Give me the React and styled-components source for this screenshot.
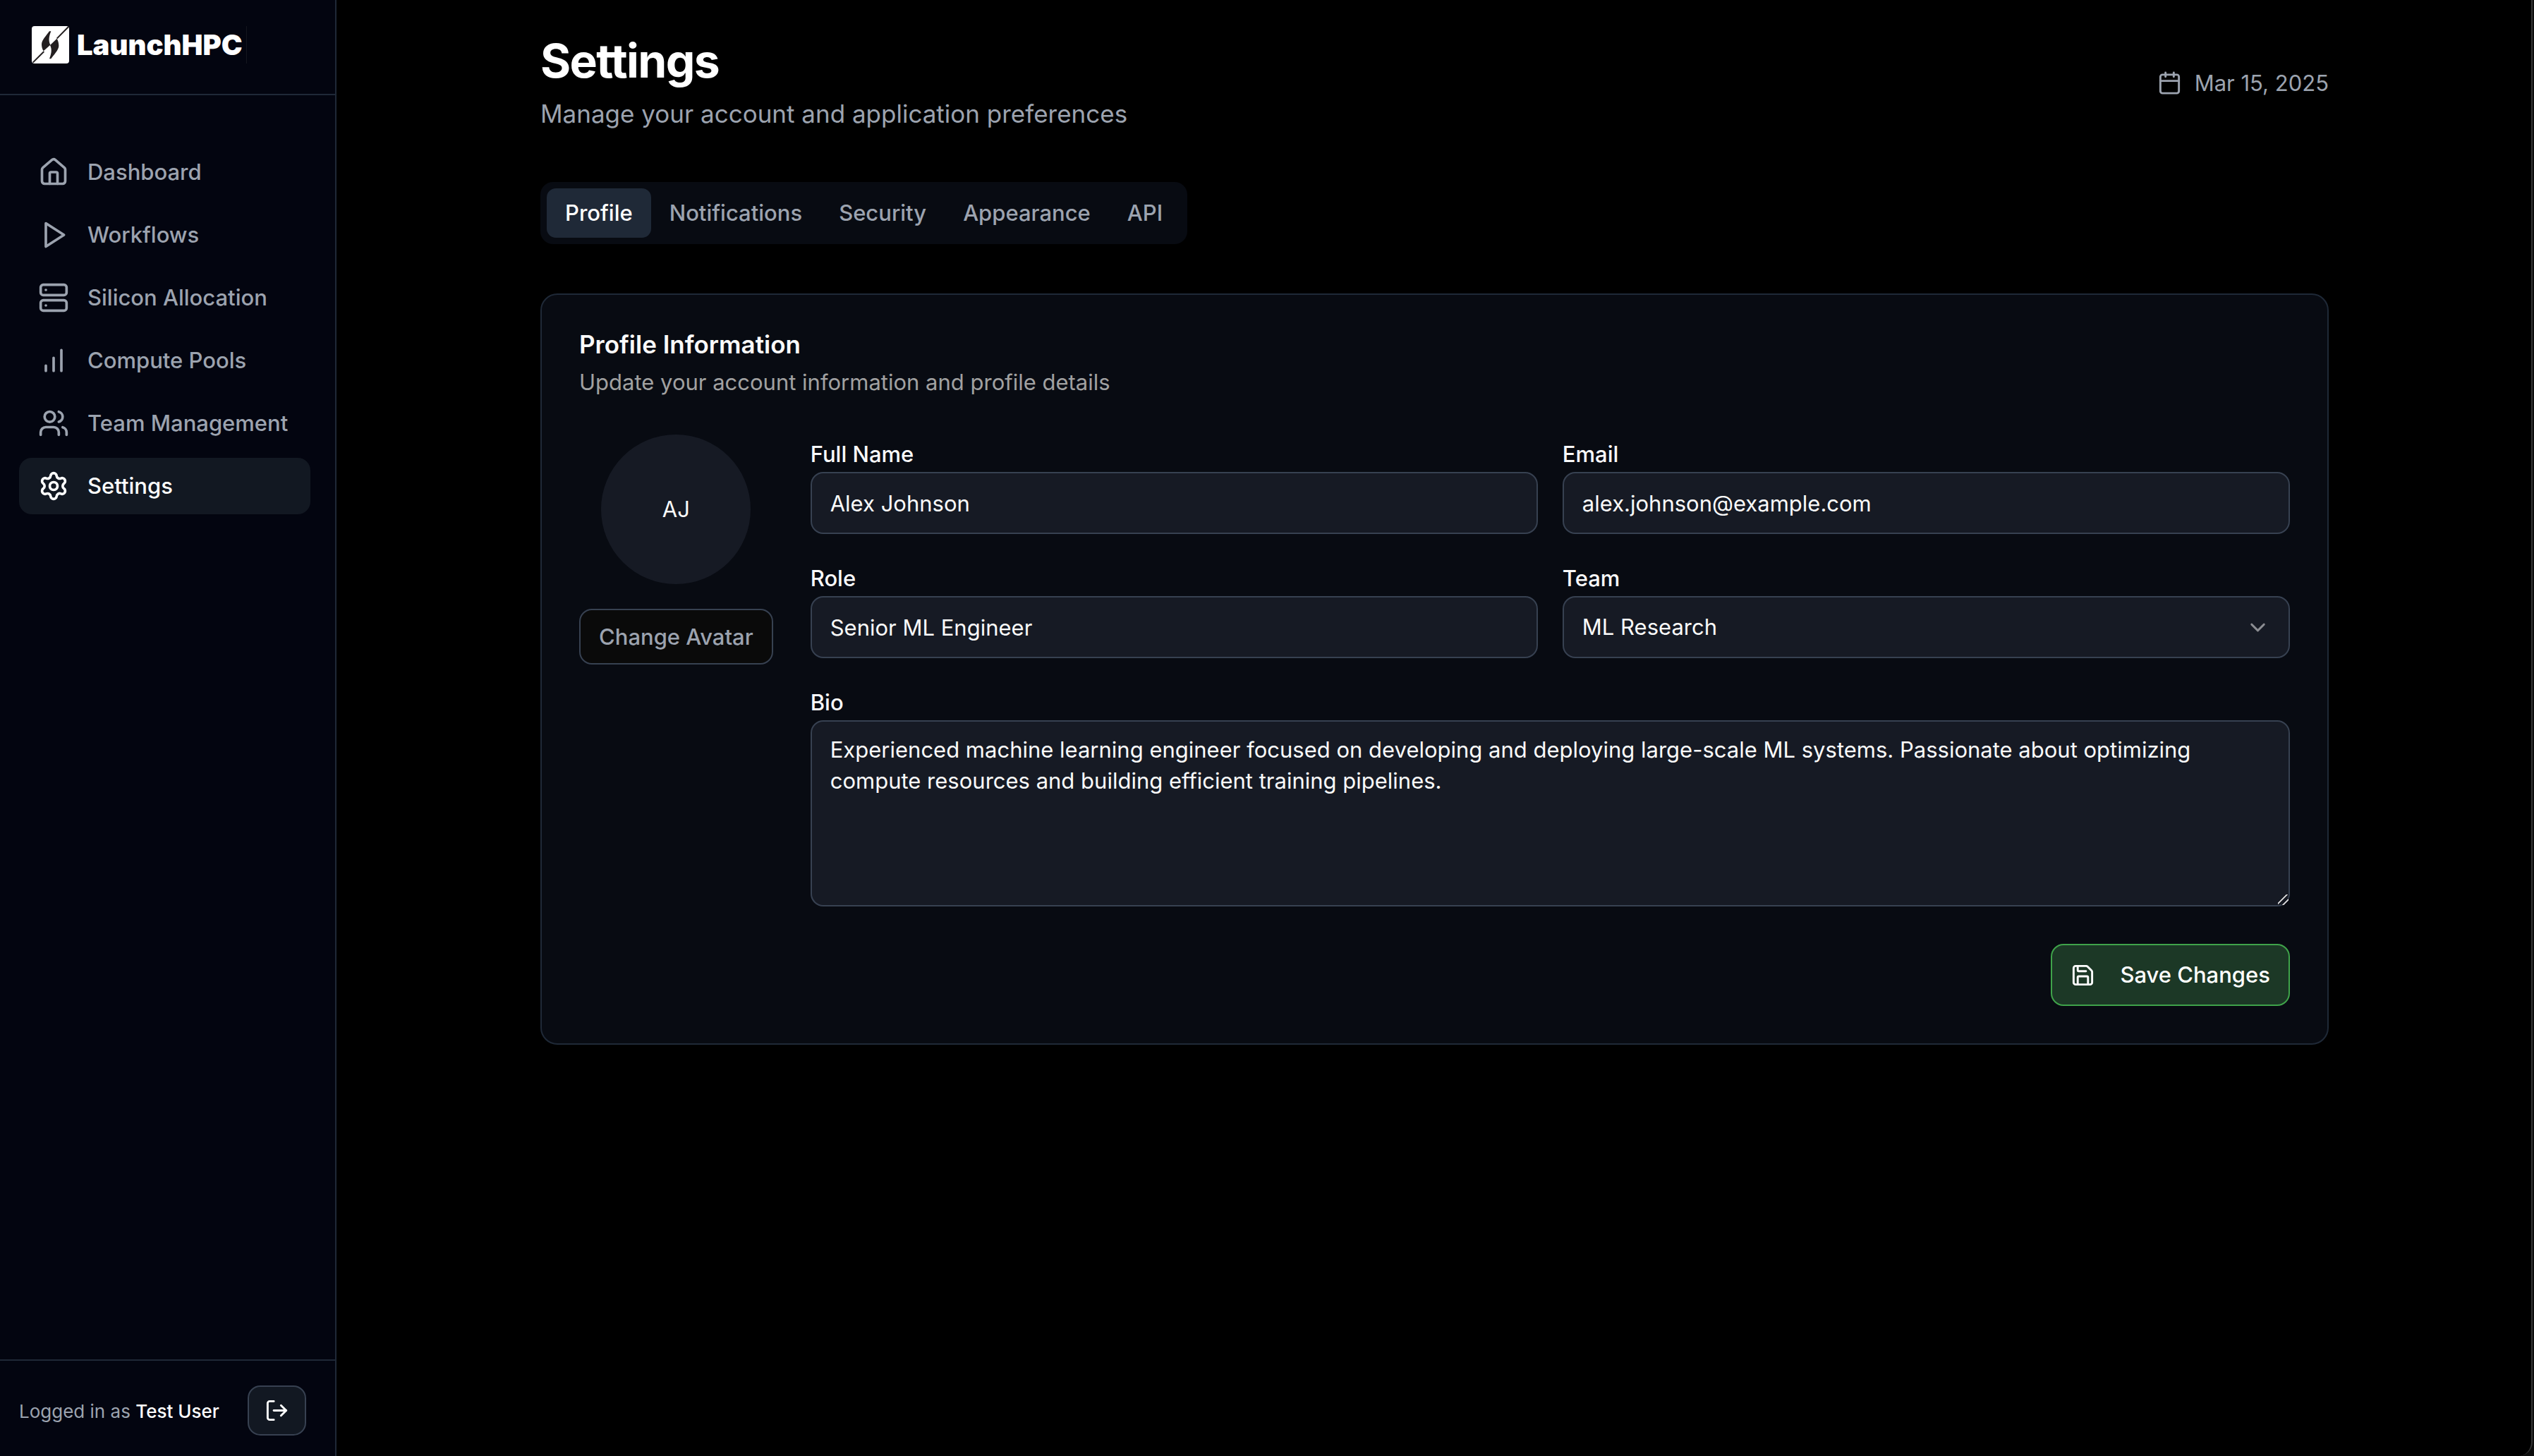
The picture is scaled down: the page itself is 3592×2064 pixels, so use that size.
import React, { useState } from "react";
import styled, { createGlobalStyle } from "styled-components";
import {
  House,
  Server,
  Users,
  Settings,
  LogOut,
  Calendar,
  ChevronDown,
  Save,
} from "lucide-react";

const color = {
  page: "#000000",
  sidebar: "#030510",
  panel: "#080b12",
  field: "#161a24",
  active: "#121822",
  tabActive: "#1f2937",
  line: "#1f2937",
  fieldLine: "#374151",
  text: "#fafafa",
  muted: "#9ca3af",
  neutral: "#a1a1a1",
};

const GlobalStyle = createGlobalStyle`
  *, *::before, *::after { box-sizing: border-box; }
  body {
    margin: 0;
    background: ${color.page};
    color: ${color.text};
    font-family: Inter, "Liberation Sans", sans-serif;
    font-size: 31px;
    line-height: 44px;
    -webkit-font-smoothing: antialiased;
  }
  h1, h2, p { margin: 0; }
  button, input, select, textarea { font: inherit; color: inherit; margin: 0; }
`;

const Frame = styled.div`
  padding-right: 2px;
  background: #0c0c0c;
`;

const Shell = styled.div`
  display: flex;
  min-height: 100vh;
  background: ${color.page};
  border-right: 2px solid #333333;
  border-bottom-right-radius: 20px;
`;

const Sidebar = styled.aside`
  display: flex;
  flex-direction: column;
  flex: 0 0 477px;
  background: ${color.sidebar};
  border-right: 2px solid ${color.line};
`;

const Brand = styled.header`
  display: flex;
  align-items: flex-start;
  height: 135px;
  padding: 37px 44px 0 45px;
  border-bottom: 2px solid ${color.line};
`;

const BrandLink = styled.a`
  display: flex;
  align-items: center;
  gap: 11px;
  padding-right: 5px;
  border-right: 1px solid #14161f;
  color: #ffffff;
  font-size: 40px;
  font-weight: 900;
  line-height: 53px;
  text-decoration: none;
`;

const Nav = styled.nav`
  display: flex;
  flex-direction: column;
  flex: 1;
  gap: 9px;
  padding: 69px 35px 0 27px;
`;

const NavItem = styled.a`
  display: flex;
  align-items: center;
  gap: 26px;
  height: 80px;
  padding: 0 27px;
  border-radius: 18px;
  background: ${(p) => (p.$active ? color.active : "transparent")};
  color: ${(p) => (p.$active ? "#ffffff" : color.muted)};
  font-weight: 500;
  text-decoration: none;
  white-space: nowrap;
`;

const Account = styled.footer`
  display: flex;
  align-items: center;
  justify-content: space-between;
  padding: 35px 41px 29px 27px;
  border-top: 2px solid ${color.line};
`;

const AccountText = styled.p`
  padding-top: 2px;
  color: ${color.muted};
  font-size: 26px;
  line-height: 35px;
  white-space: nowrap;
`;

const AccountName = styled.span`
  color: #ffffff;
  font-weight: 500;
`;

const LogoutButton = styled.button`
  display: flex;
  align-items: center;
  justify-content: center;
  width: 83px;
  height: 71px;
  padding: 0;
  border: 2px solid ${color.fieldLine};
  border-radius: 18px;
  background: ${color.active};
  color: #ffffff;
`;

const Main = styled.main`
  flex: 1;
  padding: 47px 70px 47px 72px;
`;

const Content = styled.div`
  display: flex;
  flex-direction: column;
  gap: 70px;
  max-width: 2535px;
  margin: 0 auto;
`;

const PageHeader = styled.header`
  display: flex;
  align-items: center;
  justify-content: space-between;
`;

const PageTitle = styled.h1`
  color: #ffffff;
  font-size: 66px;
  font-weight: 700;
  line-height: 79px;
  letter-spacing: -0.025em;
`;

const PageSubtitle = styled.p`
  margin-top: 9px;
  color: ${color.muted};
  font-size: 35px;
  line-height: 53px;
`;

const Today = styled.div`
  display: flex;
  align-items: center;
  gap: 18px;
  color: ${color.muted};
`;

const TabList = styled.div`
  display: flex;
  align-self: flex-start;
  padding: 9px;
  border-radius: 18px;
  background: ${color.panel};
`;

const Tab = styled.button`
  height: 70px;
  padding: 0 26px;
  border: 0;
  border-radius: 13px;
  background: ${(p) => (p.$active ? color.tabActive : "transparent")};
  color: ${(p) => (p.$active ? "#ffffff" : color.muted)};
  font-weight: 500;
`;

const Card = styled.section`
  display: flex;
  flex-direction: column;
  gap: 52px;
  padding: 53px;
  border: 2px solid ${color.line};
  border-radius: 24px;
  background: ${color.panel};
`;

const CardHeader = styled.header`
  display: flex;
  flex-direction: column;
  gap: 14px;
`;

const CardTitle = styled.h2`
  font-size: 35px;
  font-weight: 600;
  line-height: 35px;
`;

const CardText = styled.p`
  color: ${color.neutral};
`;

const ProfileForm = styled.form`
  display: grid;
  grid-template-columns: auto 1fr;
  gap: 53px;
`;

const AvatarColumn = styled.div`
  display: flex;
  flex-direction: column;
  align-items: center;
  gap: 35px;
`;

const Avatar = styled.div`
  display: flex;
  align-items: center;
  justify-content: center;
  width: 212px;
  height: 212px;
  border-radius: 50%;
  background: ${color.field};
`;

const OutlineButton = styled.button`
  height: 79px;
  padding: 0 26px;
  border: 2px solid ${color.fieldLine};
  border-radius: 18px;
  background: #0a0a0a;
  color: ${color.muted};
  font-weight: 500;
`;

const Fields = styled.div`
  display: grid;
  grid-template-columns: 1fr 1fr;
  gap: 35px;
`;

const Field = styled.div`
  display: flex;
  flex-direction: column;
  grid-column: ${(p) => (p.$wide ? "1 / -1" : "auto")};
`;

const Label = styled.label`
  padding-top: 2px;
  font-weight: 500;
  line-height: 51px;
`;

const controlBase = `
  width: 100%;
  border: 2px solid ${color.fieldLine};
  border-radius: 18px;
  background: ${color.field};
  outline: none;
`;

const TextInput = styled.input`
  ${controlBase}
  height: 88px;
  padding: 0 26px;
`;

const TextArea = styled.textarea`
  ${controlBase}
  display: block;
  height: 264px;
  padding: 18px 26px;
  resize: vertical;

  &::-webkit-resizer {
    background: linear-gradient(
      135deg,
      transparent 34%,
      #0c0d12 34%,
      #0c0d12 38%,
      #c4c5c9 38%,
      #c4c5c9 47%,
      #0c0d12 47%,
      #0c0d12 51%,
      transparent 51%,
      transparent 64%,
      #0c0d12 64%,
      #0c0d12 68%,
      #c4c5c9 68%,
      #c4c5c9 77%,
      #0c0d12 77%,
      #0c0d12 81%,
      transparent 81%
    );
  }
`;

const SelectBox = styled.div`
  display: grid;
  align-items: center;

  > * { grid-area: 1 / 1; }
  > svg {
    justify-self: end;
    margin-right: 28px;
    color: #8b8d92;
    pointer-events: none;
  }
`;

const Select = styled.select`
  ${controlBase}
  height: 88px;
  padding: 0 26px;
  appearance: none;
`;

const Actions = styled.div`
  display: flex;
  grid-column: 1 / -1;
  justify-content: flex-end;
`;

const SaveButton = styled.button`
  display: flex;
  align-items: center;
  gap: 35px;
  height: 88px;
  padding: 0 26px;
  border: 2px solid #3fa34a;
  border-radius: 18px;
  background: #1c3826;
  color: #ffffff;
  font-weight: 500;
`;

function LogoMark() {
  return (
    <svg width="53" height="53" viewBox="0 0 159 159" aria-hidden="true">
      <rect width="159" height="159" rx="12" fill="#ffffff" />
      <path d="M5 155L52 108M107 53L156 3" stroke="#231f20" strokeWidth="6" fill="none" />
      <g fill="#231f20">
        <path d="M75 22L82 22C75 40 69 60 79 80L50 106C44 96 42 86 42 77C42 60 64 38 75 22Z" />
        <path d="M82 139L75 139C82 121 88 101 78 81L107 53C113 63 115 75 115 84C115 101 93 123 82 139Z" />
      </g>
    </svg>
  );
}

function PlayIcon({ size }) {
  return (
    <svg width={size} height={size} viewBox="0 0 24 24" fill="none" stroke="currentColor" strokeWidth="2" strokeLinecap="round" strokeLinejoin="round" aria-hidden="true">
      <polygon points="6 3 20 12 6 21 6 3" />
    </svg>
  );
}

function BarsIcon({ size }) {
  return (
    <svg width={size} height={size} viewBox="0 0 24 24" fill="none" stroke="currentColor" strokeWidth="2" strokeLinecap="round" aria-hidden="true">
      <path d="M12 20V10M18 20V4M6 20V16" />
    </svg>
  );
}

const navItems = [
  { label: "Dashboard", icon: House },
  { label: "Workflows", icon: PlayIcon },
  { label: "Silicon Allocation", icon: Server },
  { label: "Compute Pools", icon: BarsIcon },
  { label: "Team Management", icon: Users },
  { label: "Settings", icon: Settings },
];

const tabs = ["Profile", "Notifications", "Security", "Appearance", "API"];

const teams = ["ML Research", "Infrastructure", "Data Science"];

const defaultBio =
  "Experienced machine learning engineer focused on developing and deploying large-scale ML systems. Passionate about optimizing compute resources and building efficient training pipelines.";

export default function App() {
  const [tab, setTab] = useState("Profile");

  return (
    <Frame>
      <GlobalStyle />
      <Shell>
        <Sidebar>
          <Brand>
            <BrandLink href="#home">
              <LogoMark />
              LaunchHPC
            </BrandLink>
          </Brand>
          <Nav aria-label="Main">
            {navItems.map(({ label, icon: Icon }) => (
              <NavItem key={label} href="#" $active={label === "Settings"}>
                <Icon size={44} />
                {label}
              </NavItem>
            ))}
          </Nav>
          <Account>
            <AccountText>
              Logged in as <AccountName>Test User</AccountName>
            </AccountText>
            <LogoutButton type="button" aria-label="Log out">
              <LogOut size={35} />
            </LogoutButton>
          </Account>
        </Sidebar>

        <Main>
          <Content>
            <PageHeader>
              <div>
                <PageTitle>Settings</PageTitle>
                <PageSubtitle>Manage your account and application preferences</PageSubtitle>
              </div>
              <Today>
                <Calendar size={35} />
                <time dateTime="2025-03-15">Mar 15, 2025</time>
              </Today>
            </PageHeader>

            <TabList role="tablist">
              {tabs.map((name) => (
                <Tab
                  key={name}
                  type="button"
                  role="tab"
                  aria-selected={name === tab}
                  $active={name === tab}
                  onClick={() => setTab(name)}
                >
                  {name}
                </Tab>
              ))}
            </TabList>

            <Card>
              <CardHeader>
                <CardTitle>Profile Information</CardTitle>
                <CardText>Update your account information and profile details</CardText>
              </CardHeader>
              <ProfileForm onSubmit={(e) => e.preventDefault()}>
                <AvatarColumn>
                  <Avatar>AJ</Avatar>
                  <OutlineButton type="button">Change Avatar</OutlineButton>
                </AvatarColumn>
                <Fields>
                  <Field>
                    <Label htmlFor="name">Full Name</Label>
                    <TextInput id="name" defaultValue="Alex Johnson" />
                  </Field>
                  <Field>
                    <Label htmlFor="email">Email</Label>
                    <TextInput id="email" type="email" defaultValue="alex.johnson@example.com" />
                  </Field>
                  <Field>
                    <Label htmlFor="role">Role</Label>
                    <TextInput id="role" defaultValue="Senior ML Engineer" />
                  </Field>
                  <Field>
                    <Label htmlFor="team">Team</Label>
                    <SelectBox>
                      <Select id="team" defaultValue="ML Research">
                        {teams.map((team) => (
                          <option key={team}>{team}</option>
                        ))}
                      </Select>
                      <ChevronDown size={35} />
                    </SelectBox>
                  </Field>
                  <Field $wide>
                    <Label htmlFor="bio">Bio</Label>
                    <TextArea id="bio" spellCheck={false} defaultValue={defaultBio} />
                  </Field>
                </Fields>
                <Actions>
                  <SaveButton type="submit">
                    <Save size={35} />
                    Save Changes
                  </SaveButton>
                </Actions>
              </ProfileForm>
            </Card>
          </Content>
        </Main>
      </Shell>
    </Frame>
  );
}
